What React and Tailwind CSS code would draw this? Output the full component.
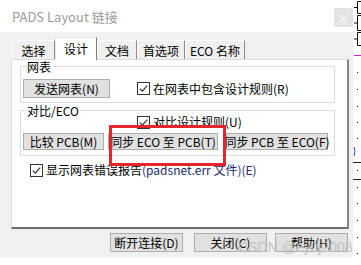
import React from 'react';

const tabs = [
  { label: '选择', w: 'w-[43px]' },
  { label: '设计', w: 'w-[42px]', active: true },
  { label: '文档', w: 'w-[40px]' },
  { label: '首选项', w: 'w-[48px]' },
  { label: 'ECO 名称', w: 'w-[60px]' },
];

function Check() {
  return (
    <svg width="13" height="13" viewBox="0 0 13 13" className="shrink-0">
      <rect x="0.5" y="0.5" width="12" height="12" fill="white" stroke="#333" />
      <path d="M2.8 6.6 L5.4 9.2 L10.2 3.6" fill="none" stroke="#333" strokeWidth="1.2" />
    </svg>
  );
}

function Btn({ children, className = '' }) {
  return (
    <div className={`flex items-center justify-center bg-[#e1e1e1] border border-[#adadad] whitespace-nowrap ${className}`}>
      {children}
    </div>
  );
}

function Group({ label, className = '', children }) {
  return (
    <div className={`relative ml-[8px] w-[315px] border border-[#dcdcdc] ${className}`}>
      <span className="absolute left-[5px] top-[-6px] px-[1px] bg-white leading-[12px]">{label}</span>
      {children}
    </div>
  );
}

function SideStrip() {
  const brackets = [[1, 13], [15, 30], [32, 45]];
  const dots = [72, 89, 106, 122, 138, 170, 187, 203, 220, 237, 253];
  return (
    <svg width="8" height="265" viewBox="0 0 8 265" className="shrink-0">
      {brackets.map(([a, b], i) => (
        <g key={i} stroke="#111" strokeWidth="1" fill="none">
          <path d={`M8 ${a + 0.5} H4.5 V${b + 0.5} H8`} />
          <path d={`M1 ${(a + b) / 2 + 0.5} H4.5`} />
        </g>
      ))}
      <path d="M1 55.5 H8" stroke="#d21fd2" strokeWidth="1" />
      {dots.map((y) => (
        <rect key={y} x="4" y={y} width="1" height="1" fill="#222" />
      ))}
      <path d="M0 162.5 H8 M0 179.5 H8" stroke="#222" strokeWidth="1" />
      <path d="M1 147 Q3 151.5 1 156" stroke="#1e4fd0" strokeWidth="1" fill="none" />
    </svg>
  );
}

export default function App() {
  return (
    <div className="relative w-[361px] h-[265px] overflow-hidden bg-white flex text-[12px] leading-[14px] text-black font-['Noto_Sans_CJK_SC','Noto_Sans',sans-serif]">
      <div className="w-[353px] flex flex-col">
        {/* title bar */}
        <div className="h-[32px] flex items-start justify-between bg-white">
          <div className="pl-[12px] pt-[9px] text-[13px] leading-[16px] text-[#9a9a9a]">PADS Layout 链接</div>
          <div className="mt-[8px] w-[19px] h-[19px] bg-[#e3e3e3] flex items-center justify-center text-white text-[13px] leading-none">×</div>
        </div>

        {/* body */}
        <div className="h-[225px] bg-[#f0f0f0] flex flex-col pt-[5px]">
          <div className="flex items-end h-[22px] pl-[12px]">
            {tabs.map((t) =>
              t.active ? (
                <div key={t.label} className={`${t.w} h-[23px] -mb-px z-10 relative bg-white border-l border-t border-[#e6e6e6] border-r border-r-[#7a7a7a] flex justify-center pt-[4px]`}>
                  {t.label}
                </div>
              ) : (
                <div key={t.label} className={`${t.w} h-[19px] bg-[#f0f0f0] border-l border-t border-[#fdfdfd] border-r border-r-[#8c8c8c] flex justify-center pt-[3px] whitespace-nowrap`}>
                  {t.label}
                </div>
              )
            )}
          </div>

          {/* tab page */}
          <div className="ml-[11px] w-[338px] h-[170px] bg-white border-l border-t border-[#dcdcdc] border-r-2 border-b-2 border-r-[#858585] border-b-[#6e6e6e] flex flex-col">
            <Group label="网表" className="mt-[6px] h-[37px]">
              <div className="flex items-center pl-[2px] pt-[12px]">
                <Btn className="w-[87px] h-[19px]">发送网表(N)</Btn>
                <div className="flex items-center ml-[27px] gap-[3px]">
                  <Check />
                  <span>在网表中包含设计规则(R)</span>
                </div>
              </div>
            </Group>

            <Group label="对比/ECO" className="mt-[7px] h-[46px]">
              <div className="flex items-center gap-[3px] pl-[116px] mt-[4px] h-[14px]">
                <Check />
                <span>对比设计规则(U)</span>
              </div>
              <div className="flex items-center pl-[2px] mt-[4px]">
                <Btn className="w-[81px] h-[17px]">比较 PCB(M)</Btn>
                <Btn className="ml-[4px] w-[110px] h-[17px]">同步 ECO 至 PCB(T)</Btn>
                <Btn className="ml-[8px] w-[102px] h-[17px]">同步 PCB 至 ECO(F)</Btn>
              </div>
            </Group>

            <div className="flex items-center gap-[3px] ml-[18px] mt-[7px]">
              <Check />
              <span>显示网表错误报告<span className="text-[#1c2a6a]">(padsnet.err 文件)(E)</span></span>
            </div>
          </div>

          {/* bottom buttons */}
          <div className="flex mt-[4px] pl-[110px]">
            <Btn className="w-[73px] h-[19px]">断开连接(D)</Btn>
            <Btn className="ml-[11px] w-[73px] h-[19px]">关闭(C)</Btn>
            <Btn className="ml-[8px] w-[73px] h-[19px]">帮助(H)</Btn>
          </div>
        </div>
        <div className="flex-1 bg-white" />
      </div>

      <SideStrip />

      {/* annotation + watermark overlays */}
      <div className="absolute left-[109px] top-[125px] w-[117px] h-[41px] border-[3px] border-[#e3262b]" />
      <div className="absolute left-[238px] top-[238px] text-[14px] leading-[18px] text-[#bdbdbd]/90 font-['Liberation_Sans',sans-serif] whitespace-nowrap">
        CSDN @eyuj2008
      </div>
    </div>
  );
}
